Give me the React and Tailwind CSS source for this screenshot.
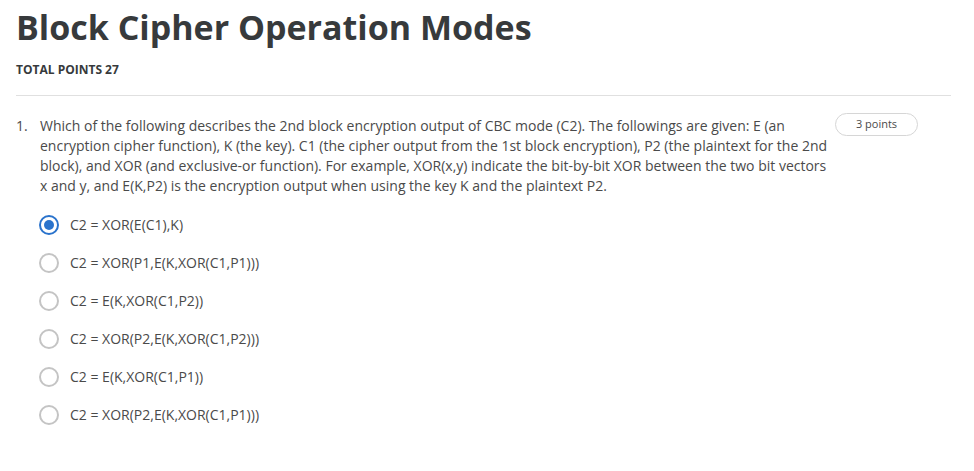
import React from "react";

const options = [
  "C2 = XOR(E(C1),K)",
  "C2 = XOR(P1,E(K,XOR(C1,P1)))",
  "C2 = E(K,XOR(C1,P2))",
  "C2 = XOR(P2,E(K,XOR(C1,P2)))",
  "C2 = E(K,XOR(C1,P1))",
  "C2 = XOR(P2,E(K,XOR(C1,P1)))",
];

function Radio({ checked }) {
  return (
    <span
      className={`flex h-[20px] w-[20px] shrink-0 items-center justify-center rounded-full border-2 ${
        checked ? "border-[#2a73cc]" : "border-[#c4c4c4]"
      }`}
    >
      {checked && <span className="h-[10px] w-[10px] rounded-full bg-[#2a73cc]" />}
    </span>
  );
}

export default function App() {
  return (
    <div className="min-h-[471px] w-[974px] bg-white font-['Open_Sans',sans-serif] text-[#373a3c]">
      <div className="px-4 pt-[4px]">
        <h1 className="text-[34px] font-bold leading-[46px] text-[#373a3c]">Block Cipher Operation Modes</h1>
        <div className="mt-[12px] text-[12px] font-bold leading-[16px]">TOTAL POINTS 27</div>
        <div className="mt-[17px] mr-[7px] border-t border-[#e0e0e0]" />

        <div className="mt-[20px] flex items-start">
          <span className="w-[24px] shrink-0 text-[14px] leading-[20px] text-[#4a4a4a]">1.</span>
          <p className="w-[792px] text-[14px] leading-[20px] text-[#4a4a4a]">
            Which of the following describes the 2nd block encryption output of CBC mode (C2). The followings are
            given: E (an encryption cipher function), K (the key). C1 (the cipher output from the 1st block
            encryption), P2 (the plaintext for the 2nd block), and XOR (and exclusive-or function). For example,
            XOR(x,y) indicate the bit-by-bit XOR between the two bit vectors x and y, and E(K,P2) is the encryption
            output when using the key K and the plaintext P2.
          </p>
          <span className="ml-[3px] -mt-[3px] flex h-[23px] w-[83px] items-center justify-center rounded-full border border-[#d6d6d6] text-[11px] text-[#4a4a4a]">
            3 points
          </span>
        </div>

        <div className="mt-[19px] flex flex-col gap-[18px] pl-[23px]">
          {options.map((o, i) => (
            <div key={o} className="flex h-[20px] items-center gap-[11px]">
              <Radio checked={i === 0} />
              <span className="text-[14px] leading-[20px] text-[#4a4a4a]">{o}</span>
            </div>
          ))}
        </div>
      </div>
    </div>
  );
}
